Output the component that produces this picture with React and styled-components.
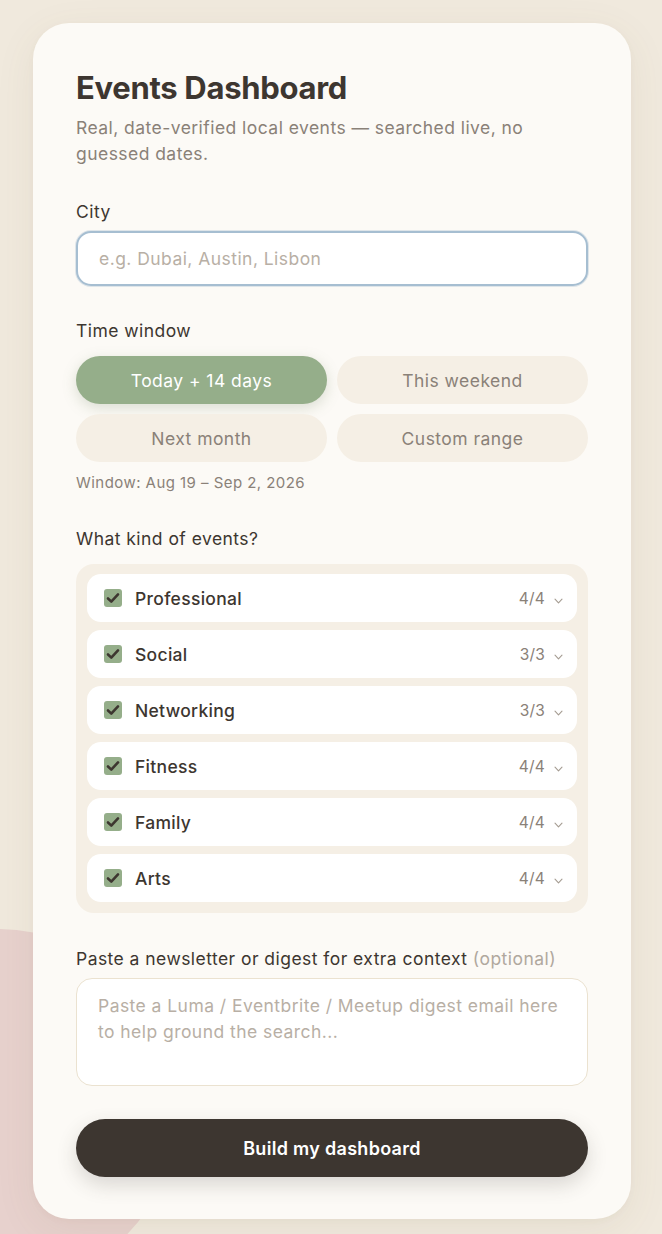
import React from 'react';
import styled, { createGlobalStyle } from 'styled-components';

const GlobalStyle = createGlobalStyle`
  html, body {
    margin: 0;
    padding: 0;
    background: #f0e9dd;
    font-family: 'Inter', 'Noto Sans', sans-serif;
    letter-spacing: 0.45px;
    color: #3d3630;
  }
  * { box-sizing: border-box; }
  input, textarea, button { letter-spacing: inherit; }
`;

const Page = styled.div`
  position: relative;
  min-height: 1234px;
  padding: 23px 0 16px;
  overflow: hidden;
`;

// pink blob peeking out behind the card
const Blob = styled.div`
  position: absolute;
  left: -182px;
  top: 929px;
  width: 360px;
  height: 360px;
  border-radius: 50%;
  background: #e7d1cd;
  z-index: 0;
`;

const Card = styled.div`
  position: relative;
  z-index: 1;
  width: 598px;
  margin: 0 0 0 33px;
  padding: 47px 43px 42px;
  background: #fcfaf6;
  border-radius: 36px;
  box-shadow: 0 10px 40px rgba(120, 100, 70, 0.08), 0 2px 6px rgba(120, 100, 70, 0.04);
`;

const Title = styled.h1`
  margin: 0;
  font-size: 31px;
  line-height: 36px;
  font-weight: 700;
  letter-spacing: -0.3px;
  color: #3d3630;
`;

const Subtitle = styled.p`
  margin: 9px 0 0;
  font-size: 17.5px;
  line-height: 26px;
  color: #8a8178;
`;

const Field = styled.div`
  margin-top: ${p => p.$top || 34}px;
  display: flex;
  flex-direction: column;
  gap: ${p => p.$gap || 8}px;
`;

const Label = styled.label`
  font-size: 17.5px;
  line-height: 22px;
  font-weight: 400;
  color: #3d3630;
`;

const Muted = styled.span`
  color: #b0a89e;
`;

const TextInput = styled.input`
  width: 100%;
  height: 55px;
  padding: 0 21px;
  border: 2px solid #a6bed1;
  border-radius: 15px;
  background: #ffffff;
  font-family: inherit;
  font-size: 17.5px;
  color: #3d3630;
  outline: none;
  box-shadow: 0 0 0 1px rgba(166, 190, 209, 0.35);
  &::placeholder { color: #b8afa5; }
`;

const ChipGrid = styled.div`
  display: grid;
  grid-template-columns: 1fr 1fr;
  gap: 10px;
`;

const Chip = styled.button`
  height: 48px;
  border: none;
  border-radius: 24px;
  font-family: inherit;
  font-size: 17.5px;
  font-weight: 400;
  cursor: pointer;
  background: ${p => (p.$active ? '#95ae8a' : '#f5efe5')};
  color: ${p => (p.$active ? '#ffffff' : '#8a8178')};
  box-shadow: ${p => (p.$active ? '0 4px 14px rgba(120, 140, 105, 0.25)' : 'none')};
`;

const WindowNote = styled.div`
  margin-top: -3px;
  font-size: 15px;
  line-height: 20px;
  color: #8a8178;
`;

const CategoryBox = styled.div`
  display: flex;
  flex-direction: column;
  gap: 8px;
  padding: 10px 11px 11px;
  background: #f5efe5;
  border-radius: 18px;
`;

const CategoryRow = styled.div`
  display: flex;
  align-items: center;
  height: 48px;
  padding: 0 14px 0 17px;
  background: #ffffff;
  border-radius: 14px;
`;

const Check = styled.span`
  display: inline-flex;
  align-items: center;
  justify-content: center;
  width: 18px;
  height: 18px;
  border-radius: 3px;
  background: #95ae8a;
  margin-right: 13px;
  flex-shrink: 0;
`;

const CategoryName = styled.span`
  flex: 1;
  font-size: 17.5px;
  font-weight: 500;
  letter-spacing: 0.3px;
  color: #3d3630;
`;

const Count = styled.span`
  font-size: 15.5px;
  font-weight: 400;
  letter-spacing: 0.2px;
  color: #8a8178;
  margin-right: 9px;
`;

const TextArea = styled.textarea`
  width: 100%;
  height: 108px;
  padding: 14px 21px;
  border: 1px solid #ebe2d0;
  border-radius: 16px;
  background: #ffffff;
  font-family: inherit;
  font-size: 17.5px;
  line-height: 26px;
  color: #3d3630;
  resize: none;
  outline: none;
  &::placeholder { color: #b8afa5; }
`;

const SubmitButton = styled.button`
  margin-top: 33px;
  width: 100%;
  height: 58px;
  border: none;
  border-radius: 29px;
  background: #3d3630;
  color: #ffffff;
  font-family: inherit;
  font-size: 18px;
  font-weight: 600;
  letter-spacing: 0.3px;
  cursor: pointer;
  box-shadow: 0 8px 20px rgba(61, 54, 48, 0.18);
`;

const CheckMark = () => (
  <svg width="14" height="12" viewBox="0 0 14 12" fill="none">
    <path d="M2 6.5 L5.3 9.6 L12 2.4" stroke="#3d3630" strokeWidth="2.6" strokeLinecap="round" strokeLinejoin="round" />
  </svg>
);

const Chevron = () => (
  <svg width="9" height="6" viewBox="0 0 9 6" fill="none" style={{ marginTop: 5 }}>
    <path d="M1 1.2 L4.5 4.8 L8 1.2" stroke="#a49b91" strokeWidth="1.1" strokeLinecap="round" strokeLinejoin="round" />
  </svg>
);

const windows = ['Today + 14 days', 'This weekend', 'Next month', 'Custom range'];

const categories = [
  { name: 'Professional', count: '4/4' },
  { name: 'Social', count: '3/3' },
  { name: 'Networking', count: '3/3' },
  { name: 'Fitness', count: '4/4' },
  { name: 'Family', count: '4/4' },
  { name: 'Arts', count: '4/4' },
];

export default function App() {
  return (
    <>
      <GlobalStyle />
      <Page>
        <Blob />
        <Card>
          <Title>Events Dashboard</Title>
          <Subtitle>Real, date-verified local events — searched live, no guessed dates.</Subtitle>

          <Field>
            <Label>City</Label>
            <TextInput placeholder="e.g. Dubai, Austin, Lisbon" />
          </Field>

          <Field $gap={14}>
            <Label>Time window</Label>
            <ChipGrid>
              {windows.map((w, i) => (
                <Chip key={w} $active={i === 0}>{w}</Chip>
              ))}
            </ChipGrid>
            <WindowNote>Window: Aug 19 – Sep 2, 2026</WindowNote>
          </Field>

          <Field $top={35} $gap={14}>
            <Label>What kind of events?</Label>
            <CategoryBox>
              {categories.map(c => (
                <CategoryRow key={c.name}>
                  <Check><CheckMark /></Check>
                  <CategoryName>{c.name}</CategoryName>
                  <Count>{c.count}</Count>
                  <Chevron />
                </CategoryRow>
              ))}
            </CategoryBox>
          </Field>

          <Field $top={35}>
            <Label>
              Paste a newsletter or digest for extra context <Muted>(optional)</Muted>
            </Label>
            <TextArea placeholder="Paste a Luma / Eventbrite / Meetup digest email here to help ground the search..." />
          </Field>

          <SubmitButton>Build my dashboard</SubmitButton>
        </Card>
      </Page>
    </>
  );
}
